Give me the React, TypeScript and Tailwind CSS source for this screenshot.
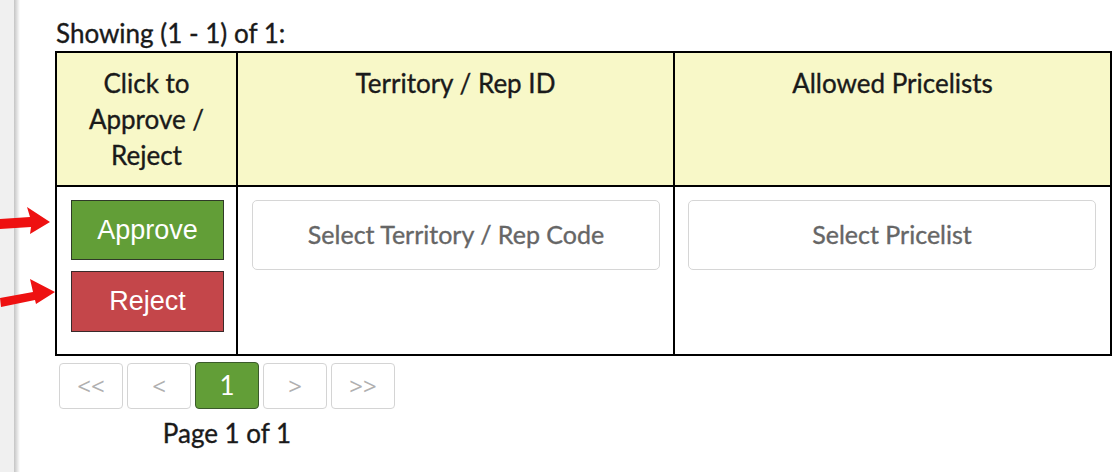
import React from 'react';

const font = { fontFamily: 'Lato, "Noto Sans", sans-serif' };

const PageBtn = ({ label, active }: { label: string; active?: boolean }) => (
    <button
        className={
            active
                ? 'w-[64px] h-[47px] rounded-[4px] border border-[#3a5a2a] bg-[#629e37] text-white text-[26px] [-webkit-text-stroke:0px]'
                : 'w-[64px] h-[46px] rounded-[4px] border border-[#d4d4d4] bg-white text-[#b0b0b0] text-[24px] font-["Open_Sans",sans-serif] [-webkit-text-stroke:0px]'
        }
    >
        {label}
    </button>
);

const Arrows = () => (
    <svg className="absolute left-0 top-[200px]" width="60" height="110" viewBox="0 0 60 110">
        <path d="M0 19 L30 17 L27 7 L50 22 L30 34 L31 27 L0 29 Z" fill="#ee1111" />
        <path d="M0 98 L33 92 L30 79 L55 92 L36 104 L35 100 L1 107 Z" fill="#ee1111" />
    </svg>
);

export default function App() {
    return (
        <div className="relative w-[1112px] h-[472px] bg-white overflow-hidden flex [-webkit-text-stroke:0.35px]" style={font}>
            <div className="w-[16px] h-full bg-[#f0f0f0]" />
            <div className="w-[7px] h-full bg-gradient-to-r from-[#c4c4c4] to-white" />

            <div className="pl-[35px] pt-[17px] text-[#1a1a1a]">
                <div className="text-[26px] leading-[32px] ml-[1px]">Showing (1 - 1) of 1:</div>

                <table className="table-fixed border-collapse w-[1055px] mt-[2px]">
                    <colgroup>
                        <col className="w-[181px]" />
                        <col className="w-[437px]" />
                        <col className="w-[437px]" />
                    </colgroup>
                    <thead>
                        <tr className="bg-[#f8f8c8] h-[134px] text-[26px] leading-[36px]">
                            <th className="border-2 border-black align-top font-normal pt-[12px] px-2">
                                Click to<br />Approve /<br />Reject
                            </th>
                            <th className="border-2 border-black align-top font-normal pt-[12px]">Territory / Rep ID</th>
                            <th className="border-2 border-black align-top font-normal pt-[12px]">Allowed Pricelists</th>
                        </tr>
                    </thead>
                    <tbody>
                        <tr className="h-[169px]">
                            <td className="border-2 border-black align-top pt-[13px] pl-[14px] pr-[11px]">
                                <div className="flex flex-col gap-[11px] [-webkit-text-stroke:0px]" style={{ fontFamily: '"Liberation Sans", Arial, sans-serif' }}>
                                    <button className="h-[60px] w-[153px] bg-[#629e37] border border-[#2f3a28] text-white text-[27px]">
                                        Approve
                                    </button>
                                    <button className="h-[61px] w-[153px] bg-[#c4464a] border border-[#3a2a2a] text-white text-[27px]">
                                        Reject
                                    </button>
                                </div>
                            </td>
                            <td className="border-2 border-black align-top pt-[13px] px-[14px]">
                                <div className="h-[70px] w-[408px] rounded-[5px] border border-[#d6d6d6] flex items-center justify-center text-[25px] text-[#666]">
                                    Select Territory / Rep Code
                                </div>
                            </td>
                            <td className="border-2 border-black align-top pt-[13px] px-[13px]">
                                <div className="h-[70px] w-[408px] rounded-[5px] border border-[#d6d6d6] flex items-center justify-center text-[25px] text-[#666]">
                                    Select Pricelist
                                </div>
                            </td>
                        </tr>
                    </tbody>
                </table>

                <div className="inline-flex flex-col items-center ml-[4px] mt-[6px]">
                    <div className="flex items-center gap-[4px]">
                        <PageBtn label="<<" />
                        <PageBtn label="<" />
                        <PageBtn label="1" active />
                        <PageBtn label=">" />
                        <PageBtn label=">>" />
                    </div>
                    <div className="text-[26px] leading-[32px] mt-[8px]">Page 1 of 1</div>
                </div>
            </div>

            <Arrows />
        </div>
    );
}
